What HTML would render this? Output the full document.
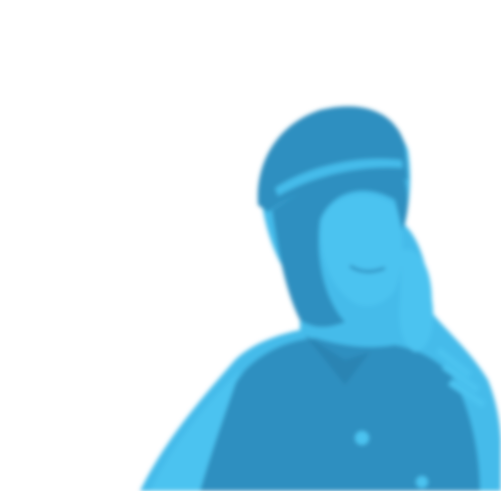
<!DOCTYPE html>
<html><head><meta charset="utf-8"><style>html,body{margin:0;padding:0;background:#fff;width:501px;height:491px;overflow:hidden}</style></head>
<body>
<svg width="501" height="491" viewBox="0 0 501 491" xmlns="http://www.w3.org/2000/svg">
<defs><filter id="b"><feGaussianBlur stdDeviation="2"/></filter></defs>
<g filter="url(#b)">
<!-- light halo/body base -->
<path d="M140 491 C165 440 200 400 235 360 C250 345 275 335 300 330 L300 290 C280 270 268 240 262 205 C258 170 275 130 320 110 C360 100 395 115 408 150 C412 175 410 200 405 225 C420 240 430 270 430 310 C445 330 470 350 488 380 C496 400 500 420 501 440 L501 491 Z" fill="#45bbea"/>
<!-- dark body -->
<path d="M165 491 C190 450 215 410 245 370 C265 350 290 340 315 338 C340 345 365 350 395 345 C420 350 440 360 455 380 C470 410 480 450 480 491 Z" fill="#2f8fc0"/>
<!-- hair -->
<path d="M272 210 C278 250 285 290 300 320 C315 330 330 328 345 322 C325 300 315 260 320 220 C330 195 360 180 395 200 L402 230 C408 215 410 200 405 180 C380 170 320 175 272 210 Z" fill="#2f8fc0"/>
<!-- hat -->
<path d="M258 205 C255 165 275 125 320 110 C360 100 395 110 405 145 L408 180 C370 172 310 180 268 212 Z" fill="#2f8fc0"/>
<path d="M275 188 C310 165 360 155 402 160 L403 168 C360 165 315 175 278 196 Z" fill="#45bbea"/>
<!-- face -->
<path d="M322 222 C330 195 365 185 395 205 C405 230 405 265 395 290 C385 305 365 312 350 300 C330 285 318 255 322 222 Z" fill="#4cc3f0"/>
<path d="M350 266 Q365 276 385 268" stroke="#2f8fc0" stroke-width="3" fill="none"/>
<!-- hand -->
<path d="M402 250 C420 245 432 270 432 300 C436 325 430 350 415 352 C400 345 398 320 400 300 Z" fill="#4cc3f0"/>
<!-- sleeve stripes -->
<path d="M438 350 L470 375 M444 366 L478 390 M450 382 L484 405" stroke="#4cc3f0" stroke-width="7"/>
<!-- left shoulder light -->
<path d="M150 491 C170 450 200 410 240 370 C230 400 215 440 200 491 Z" fill="#4cc3f0"/>
<!-- buttons -->
<circle cx="362" cy="438" r="7" fill="#4cc3f0"/>
<circle cx="422" cy="482" r="6" fill="#4cc3f0"/>
<!-- collar -->
<path d="M305 335 L345 360 L370 352 L345 385 Z" fill="#2a84b3"/>
</g>
</svg>
</body></html>
